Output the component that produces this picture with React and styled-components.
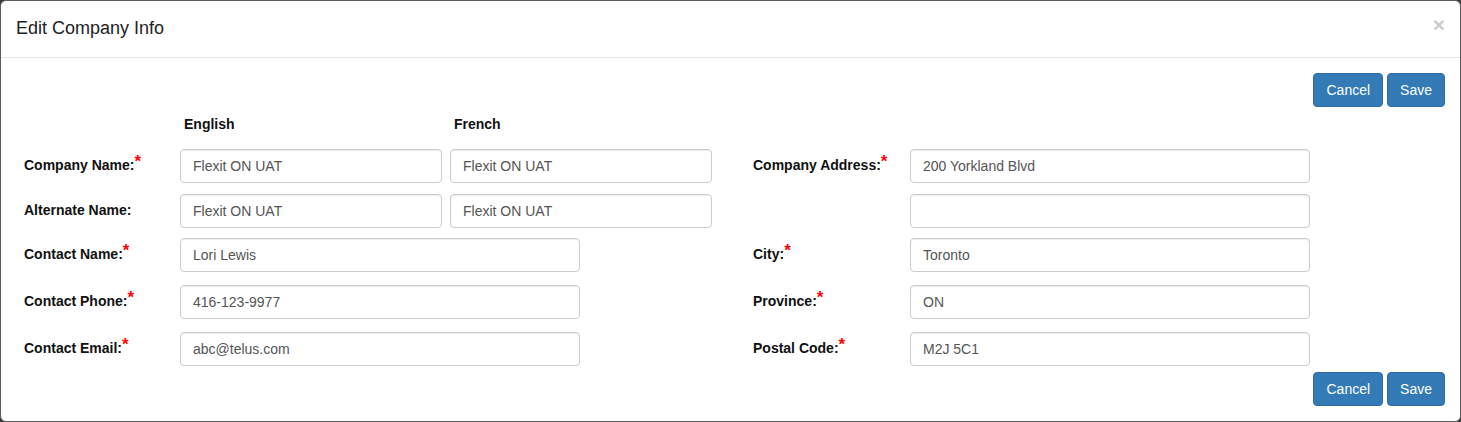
import React from 'react';
import styled, { createGlobalStyle } from 'styled-components';

const GlobalStyle = createGlobalStyle`
  html, body {
    margin: 0;
    padding: 0;
  }
  body {
    background: #3a3a3a;
    font-family: "Liberation Sans", Arial, Helvetica, sans-serif;
    font-size: 14px;
    color: #333;
  }
`;

const Modal = styled.div`
  box-sizing: border-box;
  width: 100%;
  height: 422px;
  background: #fff;
  border: 1px solid #5c5c5c;
  border-radius: 6px;
  overflow: hidden;
`;

const Header = styled.div`
  display: flex;
  justify-content: space-between;
  align-items: flex-start;
  padding: 15px;
  border-bottom: 1px solid #e5e5e5;
`;

const Title = styled.h4`
  margin: 0;
  font-size: 18px;
  font-weight: normal;
  line-height: 1.42857;
  color: #222;
`;

const Close = styled.button`
  margin-top: -2px;
  padding: 0;
  border: 0;
  background: none;
  font-family: inherit;
  font-size: 21px;
  font-weight: bold;
  line-height: 1;
  color: #000;
  opacity: 0.2;
  text-shadow: 0 1px 0 #fff;
  cursor: pointer;
`;

const Body = styled.div`
  padding: 15px;
`;

const ButtonBar = styled.div`
  display: flex;
  justify-content: flex-end;
  gap: 4px;
  margin-top: ${p => p.$top || 0}px;
`;

const Button = styled.button`
  box-sizing: border-box;
  height: 34px;
  padding: 6px 12px;
  font-family: inherit;
  font-size: 14px;
  line-height: 20px;
  color: #fff;
  background: #337ab7;
  border: 1px solid #2e6da4;
  border-radius: 4px;
  cursor: pointer;
`;

const Form = styled.div`
  padding-left: 8px;
`;

const Heads = styled.div`
  display: flex;
  margin-top: 7px;
  padding-left: 156px;
  line-height: 20px;
  font-weight: bold;
  color: #111;
`;

const HeadCell = styled.div`
  box-sizing: border-box;
  width: 270px;
  padding-left: 4px;
`;

const Row = styled.div`
  display: flex;
  align-items: flex-start;
  margin-top: ${p => p.$gap}px;
`;

const Label = styled.label`
  flex: none;
  box-sizing: border-box;
  width: ${p => p.$w || 156}px;
  margin-left: ${p => p.$offset || 0}px;
  padding-top: 6px;
  line-height: 20px;
  font-weight: bold;
  color: #111;
`;

const Star = styled.span`
  vertical-align: top;
  font-size: 17px;
  line-height: 13px;
  color: #f00;
`;

const Fields = styled.div`
  flex: none;
  display: flex;
  gap: 8px;
  width: 532px;
`;

const Input = styled.input`
  box-sizing: border-box;
  width: ${p => p.$w}px;
  height: 34px;
  padding: 6px 12px;
  font-family: inherit;
  font-size: 14px;
  line-height: 20px;
  color: #555;
  background: #fff;
  border: 1px solid #ccc;
  border-radius: 4px;
  box-shadow: inset 0 1px 1px rgba(0, 0, 0, 0.075);
  outline: none;
`;

const FieldLabel = ({ text, required, ...rest }) => (
  <Label {...rest}>
    {text}
    {required && <Star>*</Star>}
  </Label>
);

const rows = [
  {
    gap: 15,
    label: 'Company Name:',
    required: true,
    values: ['Flexit ON UAT', 'Flexit ON UAT'],
    right: { label: 'Company Address:', required: true, value: '200 Yorkland Blvd' },
  },
  {
    gap: 11,
    label: 'Alternate Name:',
    values: ['Flexit ON UAT', 'Flexit ON UAT'],
    right: { label: '', value: '' },
  },
  {
    gap: 10,
    label: 'Contact Name:',
    required: true,
    values: ['Lori Lewis'],
    right: { label: 'City:', required: true, value: 'Toronto' },
  },
  {
    gap: 13,
    label: 'Contact Phone:',
    required: true,
    values: ['416-123-9977'],
    right: { label: 'Province:', required: true, value: 'ON' },
  },
  {
    gap: 13,
    label: 'Contact Email:',
    required: true,
    values: ['abc@telus.com'],
    right: { label: 'Postal Code:', required: true, value: 'M2J 5C1' },
  },
];

export default function App() {
  return (
    <>
      <GlobalStyle />
      <Modal>
        <Header>
          <Title>Edit Company Info</Title>
          <Close type="button">×</Close>
        </Header>
        <Body>
          <ButtonBar>
            <Button>Cancel</Button>
            <Button>Save</Button>
          </ButtonBar>
          <Form>
            <Heads>
              <HeadCell>English</HeadCell>
              <HeadCell>French</HeadCell>
            </Heads>
            {rows.map(r => (
              <Row key={r.label} $gap={r.gap}>
                <FieldLabel text={r.label} required={r.required} />
                <Fields>
                  {r.values.map((v, i) => (
                    <Input
                      key={i}
                      $w={r.values.length > 1 ? 262 : 400}
                      defaultValue={v}
                    />
                  ))}
                </Fields>
                <FieldLabel
                  $offset={41}
                  $w={157}
                  text={r.right.label}
                  required={r.right.required}
                />
                <Input $w={400} defaultValue={r.right.value} />
              </Row>
            ))}
          </Form>
          <ButtonBar $top={6}>
            <Button>Cancel</Button>
            <Button>Save</Button>
          </ButtonBar>
        </Body>
      </Modal>
    </>
  );
}
